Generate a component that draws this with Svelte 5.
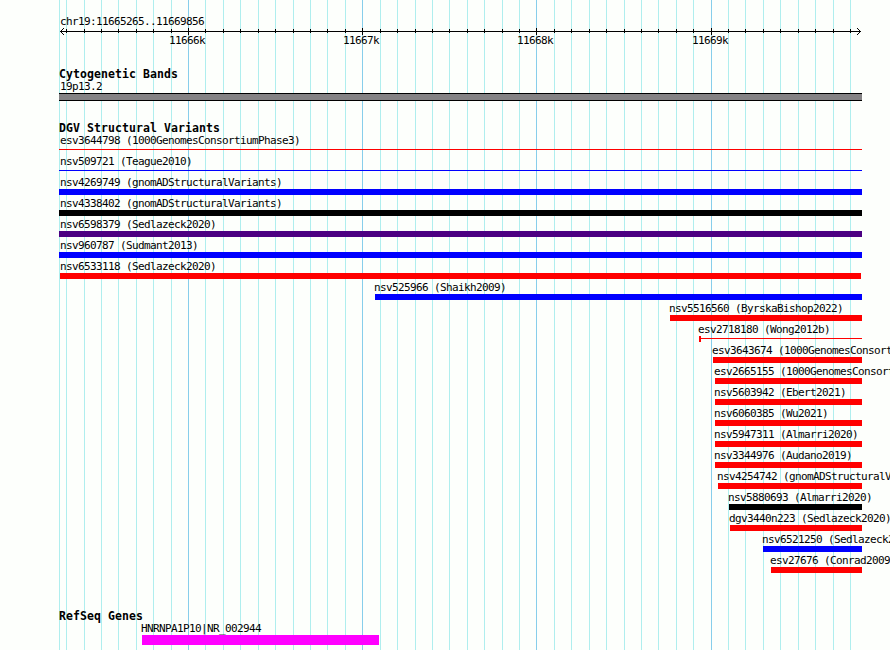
<script lang="ts">
  const left = 59;
  const right = 862;
  const tickStep = 17.42;
  const firstMajor = 188.55;

  // every tenth tick falls on a whole kilobase
  const ticks = Array.from({ length: 46 }, (_, i) => ({
    x: Math.floor(firstMajor + tickStep * (i - 7)),
    major: (i - 7) % 10 === 0
  }));

  const majorLabels = [
    { x: 169, text: '11666k' },
    { x: 343, text: '11667k' },
    { x: 517, text: '11668k' },
    { x: 692, text: '11669k' }
  ];

  const variants = [
    { name: 'esv3644798 (1000GenomesConsortiumPhase3)', start: 59, color: 'red', kind: 'thin' },
    { name: 'nsv509721 (Teague2010)', start: 59, color: 'blue', kind: 'thin' },
    { name: 'nsv4269749 (gnomADStructuralVariants)', start: 59, color: 'blue' },
    { name: 'nsv4338402 (gnomADStructuralVariants)', start: 59, color: 'black' },
    { name: 'nsv6598379 (Sedlazeck2020)', start: 59, color: 'indigo' },
    { name: 'nsv960787 (Sudmant2013)', start: 59, color: 'blue' },
    { name: 'nsv6533118 (Sedlazeck2020)', start: 60, end: 861, color: 'red' },
    { name: 'nsv525966 (Shaikh2009)', start: 375, color: 'blue' },
    { name: 'nsv5516560 (ByrskaBishop2022)', start: 670, color: 'red' },
    { name: 'esv2718180 (Wong2012b)', start: 699, color: 'red', kind: 'capped' },
    { name: 'esv3643674 (1000GenomesConsortiumPhase3)', start: 713, color: 'red' },
    { name: 'esv2665155 (1000GenomesConsortiumPhase1)', start: 715, color: 'red' },
    { name: 'nsv5603942 (Ebert2021)', start: 715, color: 'red' },
    { name: 'nsv6060385 (Wu2021)', start: 715, color: 'red' },
    { name: 'nsv5947311 (Almarri2020)', start: 715, color: 'red' },
    { name: 'nsv3344976 (Audano2019)', start: 715, color: 'red' },
    { name: 'nsv4254742 (gnomADStructuralVariants)', start: 718, color: 'red' },
    { name: 'nsv5880693 (Almarri2020)', start: 729, color: 'black' },
    { name: 'dgv3440n223 (Sedlazeck2020)', start: 730, color: 'red' },
    { name: 'nsv6521250 (Sedlazeck2020)', start: 763, color: 'blue' },
    { name: 'esv27676 (Conrad2009)', start: 771, color: 'red' }
  ];
</script>

<div class="browser">
  <svg class="grid" width="890" height="650" shape-rendering="crispEdges">
    <rect class="minor" x={left} y="0" width="1" height="650" />
    {#each ticks as tick}
      <rect class={tick.major ? 'major' : 'minor'} x={tick.x} y="0" width="1" height="650" />
    {/each}
  </svg>

  <header class="ruler">
    <div class="label region">chr19:11665265..11669856</div>
    <svg class="axis" width="890" height="8" shape-rendering="crispEdges">
      <rect x="60" y="3" width="801" height="1" />
      <path d="M61 2h1v1h-1zM62 1h1v1h-1zM63 0h1v1h-1zM61 4h1v1h-1zM62 5h1v1h-1zM63 6h1v1h-1z" />
      <path d="M859 2h1v1h-1zM858 1h1v1h-1zM857 0h1v1h-1zM859 4h1v1h-1zM858 5h1v1h-1zM857 6h1v1h-1z" />
      {#each ticks as tick}
        <rect x={tick.x} y={tick.major ? 0 : 1} width="1" height={tick.major ? 7 : 4} />
      {/each}
    </svg>
    <div class="scale">
      {#each majorLabels as item, i}
        <span class="label" style="margin-left: {item.x - (i ? majorLabels[i - 1].x + 36 : 0)}px">{item.text}</span>
      {/each}
    </div>
  </header>

  <section class="bands">
    <h2>Cytogenetic Bands</h2>
    <div class="label">19p13.2</div>
    <div class="band"></div>
  </section>

  <section class="variants">
    <h2>DGV Structural Variants</h2>
    {#each variants as v}
      <div class="row" style="margin-left: {v.start}px">
        <div class="label" class:edge={v.start === left} class:inner={v.start > 60}>{v.name}</div>
        <div
          class="bar {v.kind ?? ''}"
          style="width: {(v.end ?? right) - v.start}px; color: {v.color}"
        ></div>
      </div>
    {/each}
  </section>

  <section class="genes">
    <h2>RefSeq Genes</h2>
    <div class="gene">
      <div class="label inner">HNRNPA1P10|NR_002944</div>
      <div class="gene-bar"></div>
    </div>
  </section>
</div>

<style>
  :global(body) {
    margin: 0;
  }
  .browser {
    position: relative;
    width: 890px;
    height: 650px;
    overflow: hidden;
    background: #fdfffc;
    color: #000;
    font-family: 'DejaVu Sans Mono', monospace;
    font-size: 11px;
  }
  .grid {
    position: absolute;
    top: 0;
    left: 0;
  }
  .minor {
    fill: #afeeee;
  }
  .major {
    fill: #87ceeb;
  }
  .ruler,
  section {
    position: relative;
  }
  .label {
    height: 13px;
    line-height: 13px;
    letter-spacing: -0.622px;
    white-space: pre;
  }
  h2 {
    height: 12px;
    margin: 0 0 0 59px;
    font-size: 11.5px;
    line-height: 12px;
    font-weight: bold;
    letter-spacing: 0.077px;
  }
  .ruler {
    height: 68px;
    padding-top: 15px;
    box-sizing: border-box;
  }
  .region {
    margin-left: 60px;
  }
  .axis {
    display: block;
  }
  .scale {
    display: flex;
    margin-top: -2px;
  }
  .scale .label {
    flex: none;
    width: 36px;
  }
  .bands {
    height: 54px;
  }
  .bands .label {
    margin-left: 60px;
  }
  .band {
    width: 803px;
    height: 8px;
    margin-left: 59px;
    box-sizing: border-box;
    border: solid #000;
    border-width: 1px 0;
    background: #848284;
  }
  .variants {
    height: 488px;
  }
  .row {
    height: 21px;
  }
  .edge {
    margin-left: 1px;
  }
  .inner {
    margin-left: -1px;
  }
  .bar {
    height: 6px;
    background: currentColor;
  }
  .thin {
    height: 1px;
    margin-top: 2px;
  }
  .capped {
    box-sizing: border-box;
    border-left: 2px solid;
    background: linear-gradient(currentColor, currentColor) 0 2px / 100% 1px no-repeat;
  }
  .gene {
    margin-left: 142px;
  }
  .gene-bar {
    width: 237px;
    height: 10px;
    background: #f0f;
  }
</style>
